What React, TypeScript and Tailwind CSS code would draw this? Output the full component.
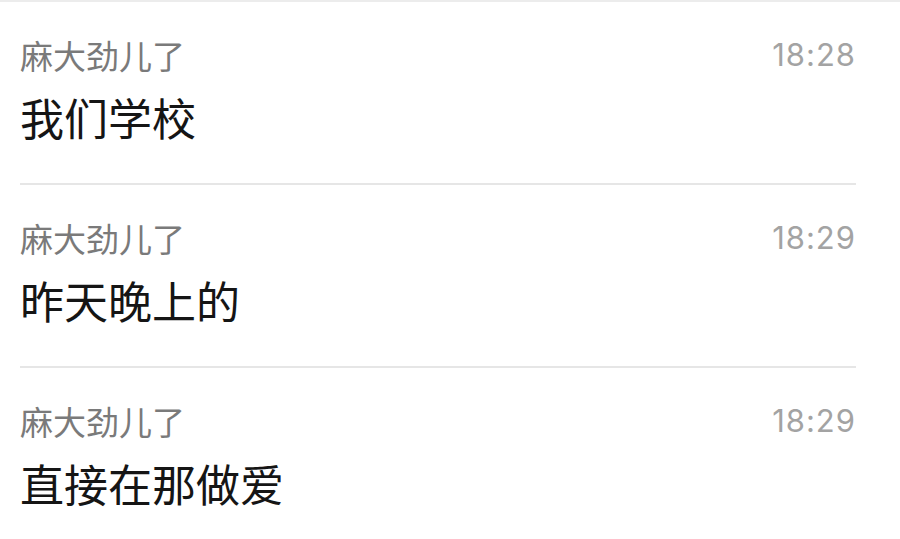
const messages = [
  { name: '麻大劲儿了', time: '18:28', text: '我们学校' },
  { name: '麻大劲儿了', time: '18:29', text: '昨天晚上的' },
  { name: '麻大劲儿了', time: '18:29', text: '直接在那做爱' },
]

const cjk = "font-['PingFang_SC','Noto_Sans_CJK_SC',sans-serif]"

export default function App() {
  return (
    <div className="w-[900px] h-[539px] overflow-hidden bg-white border-t-2 border-[#ececec]">
      {messages.map((m, i) => (
        <div key={i} className="pl-[20px] pr-[44px]">
          <div
            className={`pt-[33px] pb-[38px] ${
              i < messages.length - 1 ? 'border-b-2 border-[#e6e6e6]' : ''
            }`}
          >
            <div className="flex items-center justify-between h-[40px]">
              <span className={`${cjk} text-[33px] leading-[40px] text-[#7a7a7a]`}>
                {m.name}
              </span>
              <span className="font-['Inter',sans-serif] text-[31px] leading-[40px] text-[#a3a3a3] tracking-[1px]">
                {m.time}
              </span>
            </div>
            <div className={`${cjk} mt-[14px] text-[44px] leading-[56px] text-[#151515]`}>
              {m.text}
            </div>
          </div>
        </div>
      ))}
    </div>
  )
}
